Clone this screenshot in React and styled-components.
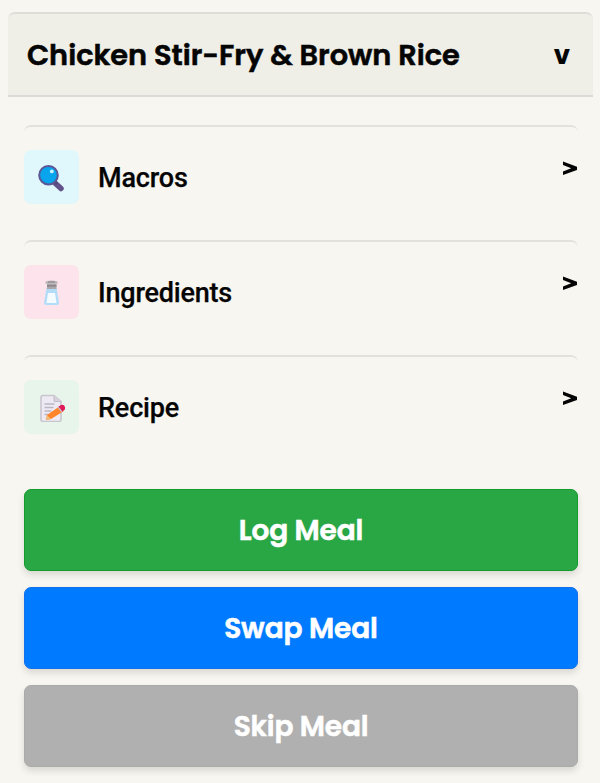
import React from "react";
import styled, { createGlobalStyle } from "styled-components";

const GlobalStyle = createGlobalStyle`
  * { box-sizing: border-box; }
  body { margin: 0; background: #f8f6f0; color: #050505; }
`;

const Page = styled.main`
  height: 783px;
  overflow: hidden;
  padding: 12px 7px 0 8px;
  font-family: Poppins, Inter, sans-serif;
`;

const Header = styled.header`
  display: flex;
  align-items: center;
  justify-content: space-between;
  height: 85px;
  padding: 1px 23px 0 19px;
  background: #efeee7;
  border-top: 2px solid #dfddd8;
  border-bottom: 2px solid #dcdbd7;
  border-radius: 7px 7px 0 0;
`;

const Title = styled.h1`
  margin: 0;
  font-size: 28.8px;
  line-height: 42px;
  font-weight: 600;
  -webkit-text-stroke: 0.55px currentColor;
  letter-spacing: ${(p) => p.$tracking}px;
  white-space: nowrap;
`;

const Toggle = styled.span`
  font-size: 26px;
  line-height: 42px;
  font-weight: 700;
`;

const Body = styled.div`
  padding: 28px 15px 0 16px;
`;

const Row = styled.section`
  display: flex;
  align-items: flex-start;
  height: 115px;
  padding: 23px 1px 0 0;
  border-top: 2px solid #e2e1dc;
  border-radius: 7px;
`;

const Tile = styled.div`
  display: flex;
  align-items: center;
  justify-content: center;
  width: 55px;
  height: 54px;
  padding: 2px 2px 0 0;
  border-radius: 7px;
  background: ${(p) => p.$color};
`;

const Label = styled.span`
  flex: 1;
  margin-left: 19px;
  font: 500 27px/54px Roboto, sans-serif;
  -webkit-text-stroke: 0.25px currentColor;
  letter-spacing: ${(p) => p.$tracking}px;
  padding-top: 1px;
`;

const Chevron = styled.svg`
  width: 14px;
  height: 15px;
  margin-top: 11px;
`;

const Actions = styled.div`
  display: grid;
  gap: 16px;
  margin-top: 19px;
`;

const Action = styled.button`
  height: 82px;
  padding: 1px 0 0;
  border: 1px solid ${(p) => p.$edge};
  border-radius: 7px;
  background: ${(p) => p.$color};
  color: #fff;
  font: 600 28px/40px Poppins, Inter, sans-serif;
  -webkit-text-stroke: 0.55px currentColor;
  letter-spacing: ${(p) => p.$tracking}px;
  box-shadow: 0 4px 7px rgba(0, 0, 0, 0.12);
`;

const Magnifier = () => (
  <svg width="28" height="28" viewBox="0 0 28 28">
    <path d="m18 19 6 5.5" stroke="#63518c" strokeWidth="5.5" strokeLinecap="round" />
    <path d="m17 17 3 3" stroke="#534779" strokeWidth="3" />
    <circle cx="11.5" cy="11.2" r="9.3" fill="#08a5ee" stroke="#5c5794" strokeWidth="2" />
    <circle cx="14.8" cy="7.4" r="1.9" fill="#c9f4ff" />
  </svg>
);

const Salt = () => (
  <svg width="28" height="28" viewBox="0 0 28 28">
    <path d="M9.5 9h10l2.5 15q0 2-2 2H9q-2 0-2-2z" fill="#b3dcf8" />
    <path d="M11 14h7l1.5 10h-10z" fill="#f5fcff" />
    <path d="M8.5 3q0-1.5 6-1.5t6 1.5v2h-12z" fill="#bdb9bd" />
    <path d="M10 5h9.5v5H10z" fill="#aaa6aa" />
    <path d="M10 6.8h9.5M11 3h7" stroke="#817e84" strokeWidth="1.2" />
  </svg>
);

const Memo = () => (
  <svg width="28" height="28" viewBox="0 0 28 28">
    <path d="M6 1.5h11l7 6v18q0 2-2 2H6q-2 0-2-2v-22q0-2 2-2z" fill="#eeeaf4" stroke="#c9c6d0" strokeWidth="1.6" />
    <path d="M17 1.5v6h7" fill="#d7d3dc" stroke="#c1bdc8" strokeWidth="1" />
    <path d="M7.5 10h10M7.5 13.5h9M7.5 17h7M7.5 20.5h4" stroke="#bbb6c4" strokeWidth="1.5" />
    <path d="m10 21 13-9 4 5-13 8-5 1z" fill="#ff842b" />
    <path d="m10 21 4 4-5 1z" fill="#efbc78" />
    <path d="m21 13 3-2q3-1 4 2 1 2-1 3l-2 2z" fill="#dc1b58" />
    <path d="m21 13 4 5" stroke="#d2b7cd" strokeWidth="1.3" />
  </svg>
);

const rows = [
  { label: "Macros", color: "#e0f7fb", Icon: Magnifier, tracking: -0.15 },
  { label: "Ingredients", color: "#fce3ec", Icon: Salt, tracking: -0.2 },
  { label: "Recipe", color: "#e7f5ea", Icon: Memo, tracking: -0.15 },
];

const actions = [
  { label: "Log Meal", color: "#29a744", edge: "#159c2e", tracking: -0.15 },
  { label: "Swap Meal", color: "#007bff", edge: "#1270ec", tracking: -0.1 },
  { label: "Skip Meal", color: "#b0b0b0", edge: "#aaaaaa", tracking: -0.15 },
];

export default function App() {
  return (
    <>
      <GlobalStyle />
      <Page>
        <Header>
          <Title $tracking={0}>Chicken Stir-Fry &amp; Brown Rice</Title>
          <Toggle>v</Toggle>
        </Header>
        <Body>
          {rows.map(({ label, color, Icon, tracking }) => (
            <Row key={label}>
              <Tile $color={color}><Icon /></Tile>
              <Label $tracking={tracking}>{label}</Label>
              <Chevron viewBox="0 0 14 15">
                <path d="M0 .5v3.6l8.2 3.2L0 10.5v3.6L14 8.9V5.8z" fill="#050505" />
              </Chevron>
            </Row>
          ))}
          <Actions>
            {actions.map(({ label, color, edge, tracking }) => (
              <Action key={label} $color={color} $edge={edge} $tracking={tracking}>{label}</Action>
            ))}
          </Actions>
        </Body>
      </Page>
    </>
  );
}
